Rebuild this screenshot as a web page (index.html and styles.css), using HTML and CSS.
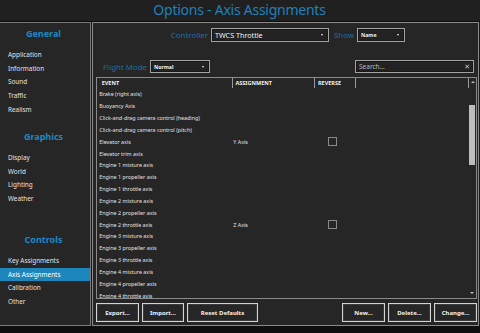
FILE: index.html
```html
<!DOCTYPE html>
<html lang="en">
<head>
<meta charset="utf-8">
<title>Options - Axis Assignments</title>
<link rel="stylesheet" href="styles.css">
</head>
<body>
<div class="app">
  <header class="titlebar">Options - Axis Assignments</header>
  <div class="panels">
    <nav class="sidebar">
      <h2 class="group-title first">General</h2>
      <ul class="nav">
        <li>Application</li>
        <li>Information</li>
        <li>Sound</li>
        <li>Traffic</li>
        <li>Realism</li>
      </ul>
      <h2 class="group-title second">Graphics</h2>
      <ul class="nav">
        <li>Display</li>
        <li>World</li>
        <li>Lighting</li>
        <li>Weather</li>
      </ul>
      <h2 class="group-title third">Controls</h2>
      <ul class="nav">
        <li>Key Assignments</li>
        <li class="active">Axis Assignments</li>
        <li>Calibration</li>
        <li>Other</li>
      </ul>
    </nav>
    <main class="main">
      <div class="toolbar toolbar-top">
        <span class="label label-controller">Controller</span>
        <div class="select select-controller"><span class="select-text">TWCS Throttle</span><span class="arrow"></span></div>
        <span class="label label-show">Show</span>
        <div class="select select-show"><span class="select-text small">Name</span><span class="arrow"></span></div>
      </div>
      <div class="toolbar toolbar-second">
        <span class="label label-mode">Flight Mode</span>
        <div class="select select-mode"><span class="select-text small">Normal</span><span class="arrow"></span></div>
        <div class="search"><span class="search-text">Search...</span><span class="search-clear">✕</span></div>
      </div>
      <div class="table">
        <div class="thead">
          <div class="th col-event">EVENT</div>
          <div class="th col-assign">ASSIGNMENT</div>
          <div class="th col-rev">REVERSE</div>
          <div class="th col-blank"></div>
          <div class="th col-scroll"><span class="up"></span></div>
        </div>
        <div class="tbody">
          <div class="rows">
            <div class="tr"><span class="td col-event">Brake (right axis)</span></div>
            <div class="tr"><span class="td col-event">Buoyancy Axis</span></div>
            <div class="tr"><span class="td col-event">Click-and-drag camera control (heading)</span></div>
            <div class="tr"><span class="td col-event">Click-and-drag camera control (pitch)</span></div>
            <div class="tr"><span class="td col-event">Elevator axis</span><span class="td col-assign">Y Axis</span><span class="td col-rev"><span class="check"></span></span></div>
            <div class="tr"><span class="td col-event">Elevator trim axis</span></div>
            <div class="tr"><span class="td col-event">Engine 1 mixture axis</span></div>
            <div class="tr"><span class="td col-event">Engine 1 propeller axis</span></div>
            <div class="tr"><span class="td col-event">Engine 1 throttle axis</span></div>
            <div class="tr"><span class="td col-event">Engine 2 mixture axis</span></div>
            <div class="tr"><span class="td col-event">Engine 2 propeller axis</span></div>
            <div class="tr"><span class="td col-event">Engine 2 throttle axis</span><span class="td col-assign">Z Axis</span><span class="td col-rev"><span class="check"></span></span></div>
            <div class="tr"><span class="td col-event">Engine 3 mixture axis</span></div>
            <div class="tr"><span class="td col-event">Engine 3 propeller axis</span></div>
            <div class="tr"><span class="td col-event">Engine 3 throttle axis</span></div>
            <div class="tr"><span class="td col-event">Engine 4 mixture axis</span></div>
            <div class="tr"><span class="td col-event">Engine 4 propeller axis</span></div>
            <div class="tr"><span class="td col-event">Engine 4 throttle axis</span></div>
          </div>
          <div class="scrollbar">
            <div class="thumb"></div>
            <span class="down"></span>
          </div>
        </div>
      </div>
      <div class="buttons">
        <button class="btn w43">Export...</button>
        <button class="btn w42">Import...</button>
        <button class="btn w71">Reset Defaults</button>
        <span class="spacer"></span>
        <button class="btn w43">New...</button>
        <button class="btn w43">Delete...</button>
        <button class="btn w43">Change...</button>
      </div>
    </main>
  </div>
</div>
</body>
</html>
```
FILE: styles.css
```css
* { box-sizing: border-box; margin: 0; padding: 0; }
html, body { width: 480px; height: 333px; overflow: hidden; }
body {
  background: #0e0e0e;
  font-family: "Noto Sans", "DejaVu Sans", sans-serif;
  color: #dcdcdc;
}
.app { display: flex; flex-direction: column; height: 333px; }

.titlebar {
  height: 22px;
  background: #202020;
  border-bottom: 1px solid #0c0c0c;
  color: #1f80bb;
  font-size: 14px;
  letter-spacing: -0.25px;
  line-height: 19px;
  text-align: center;
  padding-right: 1px;
}

.panels {
  display: flex;
  gap: 1px;
  height: 304px;
  background: #171717;
}

/* Sidebar */
.sidebar {
  width: 91px;
  background: #262626;
  border-top: 1px solid #7a7a7a;
  border-right: 1px solid #7a7a7a;
  border-bottom: 1px solid #7a7a7a;
}
.group-title {
  font-size: 9px;
  font-weight: 700;
  color: #1d88c4;
  text-align: center;
  line-height: 14px;
  padding-right: 3px;
}
.group-title.first { margin-top: 4px; }
.group-title.second { margin-top: 13.8px; }
.group-title.third { margin-top: 27.4px; }
.nav { list-style: none; margin-top: 7.2px; }
.nav li {
  height: 13.6px;
  line-height: 13.6px;
  font-size: 6.4px;
  padding-left: 8px;
  color: #e2e2e2;
}
.nav li.active { background: #1c86bd; color: #ffffff; }

/* Main */
.main {
  width: 387px;
  background: #262626;
  border: 1px solid #8a8a8a;
  display: flex;
  flex-direction: column;
}
.toolbar { display: flex; align-items: center; }
.toolbar-top { margin-top: 5px; height: 14px; }
.toolbar-second { margin-top: 18px; height: 13px; }

.label { color: #1d6fa3; font-size: 7.9px; white-space: nowrap; }
.label-controller { width: 116px; text-align: right; padding-right: 1px; }
.label-show { margin-left: 5px; width: 21px; }
.label-mode { margin-left: 10px; width: 45px; }

.select {
  position: relative;
  height: 100%;
  border: 1px solid #a2a2a2;
  box-shadow: inset 0 0 0 1px #181818;
  background: #222;
  display: flex;
  align-items: center;
  padding-left: 3px;
}
.select-controller { width: 118px; margin-left: 2px; }
.select-show { width: 48px; margin-left: 2px; }
.select-mode { width: 60px; margin-left: 2px; }
.select-text { font-size: 7.2px; color: #f2f2f2; }
.select-text.small { font-size: 5.2px; font-weight: 700; }
.arrow {
  position: absolute;
  right: 5px;
  top: 50%;
  margin-top: -1px;
  border-left: 1.5px solid transparent;
  border-right: 1.5px solid transparent;
  border-top: 2px solid #e8e8e8;
}

.search {
  margin-left: auto;
  margin-right: 4px;
  width: 119px;
  height: 100%;
  border: 1px solid #a2a2a2;
  box-shadow: inset 0 0 0 1px #181818;
  background: #222;
  display: flex;
  align-items: center;
  padding-left: 3px;
  padding-right: 3px;
}
.search-text { font-size: 6.5px; color: #b8b8b8; }
.search-clear { margin-left: auto; font-size: 7px; color: #c0c0c0; line-height: 1; }

/* Table */
.table {
  margin-top: 4px;
  margin-left: 3px;
  width: 381px;
  height: 222px;
  border: 1px solid #8a8a8a;
  display: flex;
  flex-direction: column;
  background: #262626;
}
.thead { display: flex; height: 10.4px; flex: none; }
.th {
  font-size: 5.5px;
  font-weight: 700;
  color: #f0f0f0;
  line-height: 10.4px;
  white-space: nowrap;
}
.thead .col-event { width: 135px; padding-left: 4.7px; }
.thead .col-assign { width: 82px; padding-left: 2.5px; border-left: 1px solid #9a9a9a; }
.thead .col-rev { width: 41px; padding-left: 3px; border-left: 1px solid #9a9a9a; }
.thead .col-blank { width: 113px; border-left: 1px solid #9a9a9a; }
.thead .col-scroll { width: 8px; border-left: 1px solid #9a9a9a; position: relative; }
.up {
  position: absolute;
  left: 2px;
  top: 3px;
  border-left: 2px solid transparent;
  border-right: 2px solid transparent;
  border-bottom: 2.5px solid #bdbdbd;
}

.tbody { flex: 1; display: flex; overflow: hidden; }
.rows { width: 371px; overflow: hidden; }
.tr { display: flex; height: 11.85px; align-items: center; }
.td { font-size: 5.35px; color: #e4e4e4; white-space: nowrap; }
.tr .col-event { width: 135px; padding-left: 2.3px; }
.tr .col-assign { width: 82px; padding-left: 1.3px; }
.tr .col-rev { width: 41px; padding-left: 14px; display: flex; }
.check {
  width: 9px;
  height: 9px;
  border: 1px solid #8a8a8a;
  background: #262626;
}
.scrollbar { width: 8px; position: relative; }
.thumb {
  position: absolute;
  left: 1px;
  width: 6px;
  top: 16.6px;
  height: 60px;
  background: #bdbdbd;
}
.down {
  position: absolute;
  left: 2px;
  bottom: 4px;
  border-left: 2px solid transparent;
  border-right: 2px solid transparent;
  border-top: 2.5px solid #bdbdbd;
}

/* Buttons */
.buttons {
  display: flex;
  gap: 3px;
  margin-top: 4px;
  height: 19px;
  padding-left: 3px;
  padding-right: 1px;
}
.spacer { flex: 1; }
.btn {
  height: 19px;
  background: #262626;
  border: 1px solid #d4d4d4;
  box-shadow: inset 0 0 0 1px #3a3a3a;
  color: #f2f2f2;
  font-family: "Noto Sans", "DejaVu Sans", sans-serif;
  font-size: 6px;
  font-weight: 700;
}
.w43 { width: 43px; }
.w42 { width: 42px; }
.w71 { width: 71px; }
```
